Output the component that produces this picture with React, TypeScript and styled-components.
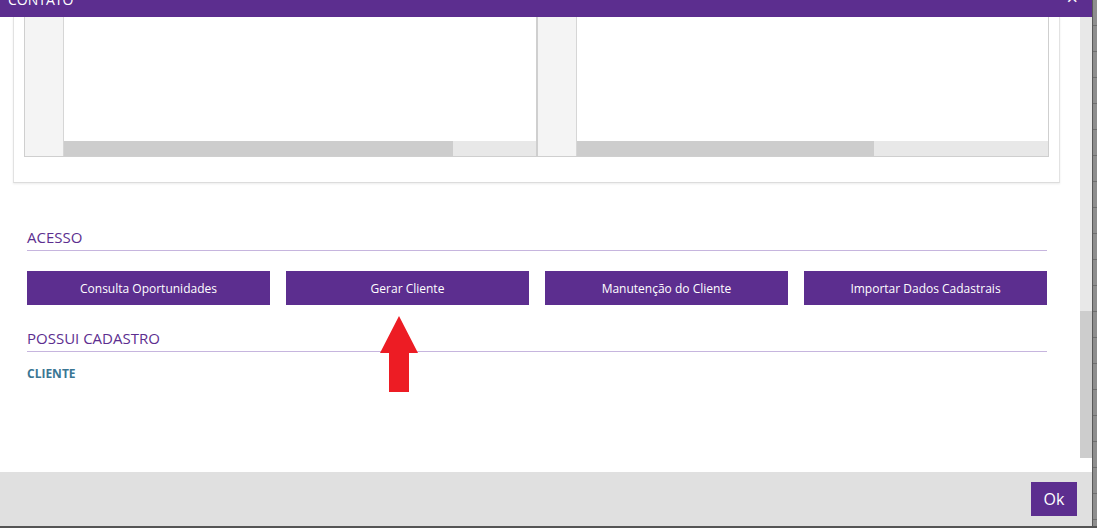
import React from "react";
import styled, { createGlobalStyle } from "styled-components";

const PURPLE = "#5c2e8f";

const Global = createGlobalStyle`
  html, body {
    margin: 0;
    padding: 0;
    overflow: hidden;
    background: #8b8b8b;
    font-family: "Open Sans", "Liberation Sans", sans-serif;
  }
`;

const panels = [{ id: "a", thumb: 82.4 }, { id: "b", thumb: 63 }];
const acessos = [
  "Consulta Oportunidades",
  "Gerar Cliente",
  "Manutenção do Cliente",
  "Importar Dados Cadastrais",
];

const App: React.FC = () => {
  return (
    <>
      <Global />
      <Page>
        <Main>
          <Modal>
            <Header>
              <Title>CONTATO</Title>
              <Close>×</Close>
            </Header>
            <Body>
              <Content>
                <Card>
                  <GridRow>
                    {panels.map((p) => (
                      <Panel key={p.id}>
                        <RowHeaders />
                        <DataArea>
                          <Rows />
                          <HScroll>
                            <HThumb thumb={p.thumb} />
                          </HScroll>
                        </DataArea>
                      </Panel>
                    ))}
                  </GridRow>
                </Card>
                <Section>
                  <SectionTitle>ACESSO</SectionTitle>
                  <Buttons>
                    {acessos.map((a) => (
                      <ActionButton key={a}>{a}</ActionButton>
                    ))}
                  </Buttons>
                </Section>
                <Section small>
                  <SectionTitle>POSSUI CADASTRO</SectionTitle>
                  <FieldLabel>CLIENTE</FieldLabel>
                </Section>
              </Content>
              <VScroll>
                <VTrack />
                <VThumb />
              </VScroll>
            </Body>
            <Footer>
              <OkButton>Ok</OkButton>
            </Footer>
          </Modal>
          <Backdrop />
        </Main>
        <BottomEdge />
        <Arrow viewBox="0 0 38 76">
          <polygon points="19,0 38,37 29,37 29,76 9,76 9,37 0,37" fill="#ed1c24" />
        </Arrow>
      </Page>
    </>
  );
};
export default App;

const Page = styled.div`
  position: relative;
  width: 1097px;
  height: 528px;
  display: flex;
  flex-direction: column;
`;
const Main = styled.div`
  display: flex;
  flex-direction: row;
  height: 526px;
`;
const Modal = styled.div`
  width: 1092px;
  display: flex;
  flex-direction: column;
  background: #fff;
`;
const Backdrop = styled.div`
  flex: 1;
  border-left: 1px solid #5a5a5a;
  background: repeating-linear-gradient(
    to bottom,
    #8e8e8e 0px,
    #8e8e8e 25px,
    #6f6f6f 25px,
    #6f6f6f 26px
  );
`;
const BottomEdge = styled.div`
  height: 2px;
  background: #555;
`;
const Header = styled.div`
  height: 17px;
  overflow: hidden;
  background: ${PURPLE};
  color: #fff;
  display: flex;
  justify-content: space-between;
  padding: 0 14px 0 8px;
`;
const Title = styled.div`
  font-size: 14px;
  line-height: 14px;
  margin-top: -7px;
`;
const Close = styled.div`
  font-size: 20px;
  line-height: 20px;
  margin-top: -12px;
`;
const Body = styled.div`
  height: 455px;
  display: flex;
  flex-direction: row;
`;
const Content = styled.div`
  flex: 1;
  display: flex;
  flex-direction: column;
`;
const Card = styled.div`
  margin: 0 20px 0 13px;
  padding: 0 10px 25px 10px;
  background: #fff;
  border-left: 1px solid #e2e2e2;
  border-right: 1px solid #e2e2e2;
  border-bottom: 1px solid #dcdcdc;
  box-shadow: 0 1px 2px rgba(0, 0, 0, 0.08);
`;
const GridRow = styled.div`
  display: grid;
  grid-template-columns: 1fr 1fr;
`;
const Panel = styled.div`
  display: flex;
  flex-direction: row;
  height: 139px;
  border: 1px solid #cfcfcf;
  border-top: none;
`;
const RowHeaders = styled.div`
  width: 38px;
  background: #f4f4f4;
  border-right: 1px solid #d6d6d6;
`;
const DataArea = styled.div`
  flex: 1;
  display: flex;
  flex-direction: column;
`;
const Rows = styled.div`
  flex: 1;
  background: #fff;
`;
const HScroll = styled.div`
  height: 15px;
  background: #e8e8e8;
  display: flex;
`;
const HThumb = styled.div<{ thumb: number }>`
  width: ${(p) => p.thumb}%;
  background: #cdcdcd;
`;
const Section = styled.div<{ small?: boolean }>`
  margin: ${(p) => (p.small ? "23px" : "44px")} 33px 0 27px;
`;
const SectionTitle = styled.div`
  font-size: 15px;
  line-height: 20px;
  color: ${PURPLE};
  padding-bottom: 3px;
  border-bottom: 1px solid #c6b5de;
`;
const Buttons = styled.div`
  display: grid;
  grid-template-columns: repeat(4, 1fr);
  gap: 16px;
  margin-top: 20px;
`;
const ActionButton = styled.button`
  height: 34px;
  border: none;
  background: ${PURPLE};
  color: #fff;
  font-family: "Open Sans", "Liberation Sans", sans-serif;
  font-size: 12px;
  padding: 0;
`;
const FieldLabel = styled.div`
  margin-top: 14px;
  font-size: 12px;
  line-height: 16px;
  font-weight: 700;
  color: #3a7693;
`;
const VScroll = styled.div`
  width: 12px;
  display: flex;
  flex-direction: column;
`;
const VTrack = styled.div`
  height: 294px;
  background: #e8e8e8;
`;
const VThumb = styled.div`
  height: 147px;
  background: #cdcdcd;
`;
const Footer = styled.div`
  flex: 1;
  background: #e0e0e0;
  display: flex;
  align-items: center;
  justify-content: flex-end;
  padding-right: 15px;
`;
const OkButton = styled.button`
  width: 46px;
  height: 34px;
  border: none;
  background: ${PURPLE};
  color: #fff;
  font-family: "Open Sans", "Liberation Sans", sans-serif;
  font-size: 16px;
  padding: 0;
`;
const Arrow = styled.svg`
  position: absolute;
  left: 380px;
  top: 316px;
  width: 38px;
  height: 76px;
`;
